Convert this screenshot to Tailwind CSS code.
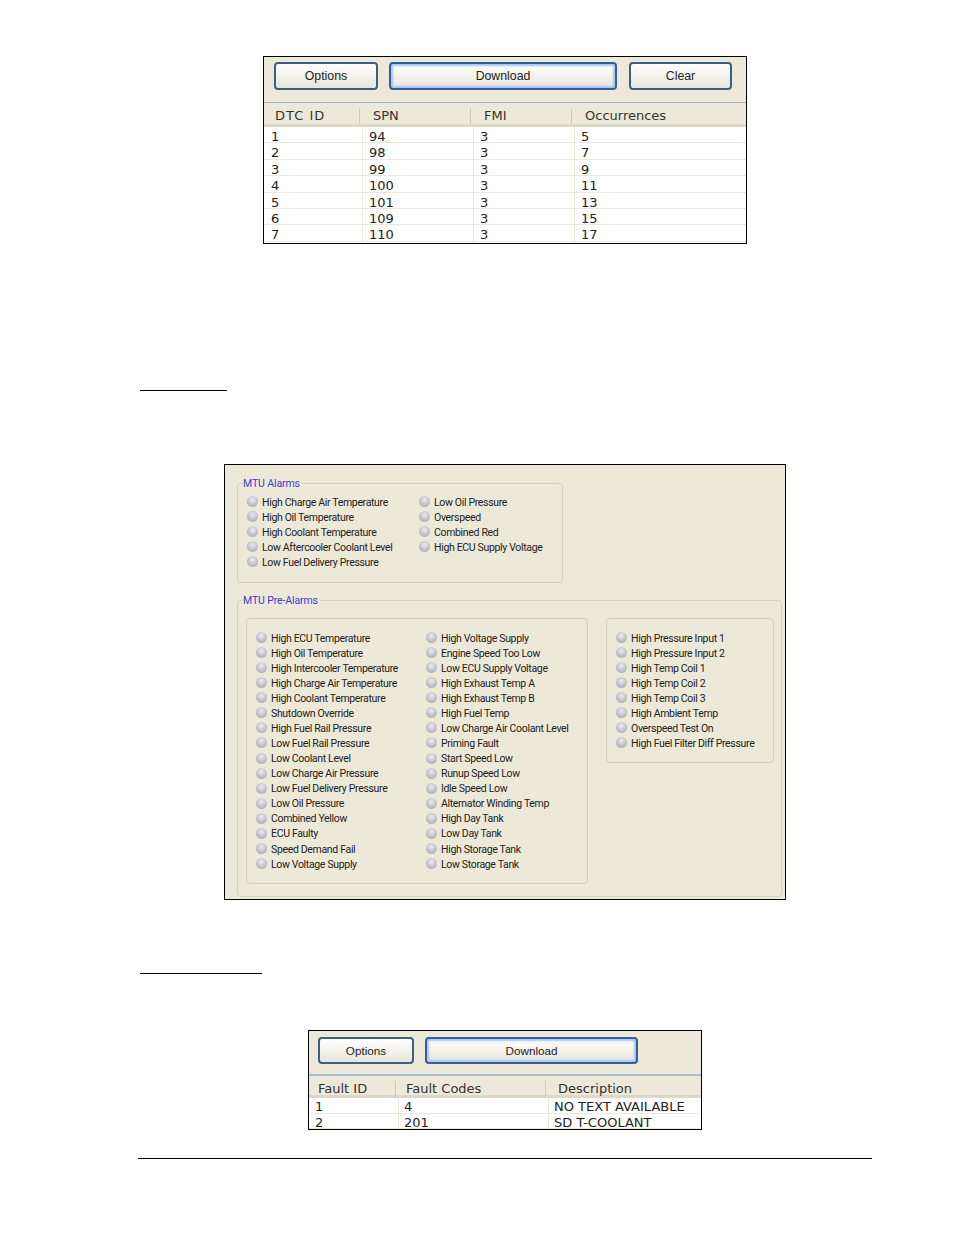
<!DOCTYPE html>
<html lang="en">
  <head>
    <meta charset="UTF-8" />
    <title>Alarm Screens</title>
    <script src="https://cdn.jsdelivr.net/npm/@tailwindcss/browser@4"></script>
  </head>
  <body class="bg-white min-h-screen font-['Liberation_Sans',sans-serif] overflow-hidden">
    <div class="w-[954px] h-[1235px] pt-[56px]">
      <!-- DTC table -->
      <div class="ml-[263px] w-[484px] h-[188px] border border-black bg-white overflow-hidden">
        <div class="h-[46px] bg-[#ece9d8] border-b border-[#9db4cc] flex pl-[10px] pt-[5px] gap-[11px]">
          <button class="w-[104px] h-[28px] rounded-[4px] border-2 border-[#3f5f80] bg-linear-to-b from-white to-[#e8e6da] text-[12.3px] text-[#222]">Options</button>
          <button class="w-[228px] h-[28px] rounded-[4px] border-2 border-[#2f5f9f] bg-linear-to-b from-white to-[#e8e6da] shadow-[inset_0_0_2px_2px_#a9c5ec] text-[12.3px] text-[#222]">Download</button>
          <button class="w-[103px] h-[28px] ml-px rounded-[4px] border-2 border-[#3f5f80] bg-linear-to-b from-white to-[#e8e6da] text-[12.3px] text-[#222]">Clear</button>
        </div>
        <div class="h-[24px] pt-[5px] bg-[#ece9d8] border-b-3 border-[#dcd9c8] grid grid-cols-[96px_111px_101px_1fr] items-center font-['DejaVu_Sans',sans-serif] text-[13px] text-[#333]">
          <div class="pl-[11px] tracking-[1px] border-r border-[#cfccbb] h-[16px] leading-[16px]">DTC ID</div>
          <div class="pl-[13px] border-r border-[#cfccbb] h-[16px] leading-[16px]">SPN</div>
          <div class="pl-[13px] border-r border-[#cfccbb] h-[16px] leading-[16px]">FMI</div>
          <div class="pl-[13px] h-[16px] leading-[16px]">Occurrences</div>
        </div>
        <div id="dtcRows" class="font-['DejaVu_Sans',sans-serif] text-[13px] text-[#222]"></div>
      </div>

      <div class="ml-[140px] mt-[146px] w-[87px] h-px bg-black"></div>

      <!-- Alarm panel -->
      <div class="ml-[224px] mt-[73px] w-[562px] h-[436px] border border-black bg-[#ece9d8] pl-[12px] pt-[12px] font-['Roboto',sans-serif] text-[10.5px] tracking-[-0.33px] text-[#222]">
        <fieldset class="w-[326px] h-[106px] border border-[#d4d1bf] rounded-[4px]">
          <legend class="ml-[5px] pr-[2px] text-[#3c3cd0] tracking-[-0.12px] leading-[13px]">MTU Alarms</legend>
          <div class="flex pt-[5px] pl-[9px]">
            <div id="alarmsA" class="w-[172px]"></div>
            <div id="alarmsB"></div>
          </div>
        </fieldset>
        <fieldset class="w-[545px] h-[303px] mt-[11px] border border-[#d4d1bf] rounded-[4px]">
          <legend class="ml-[5px] pr-[2px] text-[#3c3cd0] tracking-[-0.12px] leading-[13px]">MTU Pre-Alarms</legend>
          <div class="flex items-start pt-[11px] pl-[8px] gap-[18px]">
            <div class="w-[342px] h-[266px] border border-[#d4d1bf] rounded-[4px] flex pt-[12px] pl-[9px]">
              <div id="preA" class="w-[170px]"></div>
              <div id="preB"></div>
            </div>
            <div class="w-[168px] h-[145px] border border-[#d4d1bf] rounded-[4px] pt-[12px] pl-[9px]">
              <div id="preC"></div>
            </div>
          </div>
        </fieldset>
      </div>

      <div class="ml-[140px] mt-[73px] w-[122px] h-px bg-black"></div>

      <!-- Fault table -->
      <div class="ml-[308px] mt-[56px] w-[394px] h-[100px] border border-black bg-white overflow-hidden">
        <div class="h-[45px] bg-[#ece9d8] border-b-2 border-[#a9bdd2] flex pl-[9px] pt-[6px] gap-[11px]">
          <button class="w-[96px] h-[27px] rounded-[4px] border-2 border-[#3f5f80] bg-linear-to-b from-white to-[#e8e6da] text-[11.7px] text-[#222]">Options</button>
          <button class="w-[213px] h-[27px] rounded-[4px] border-2 border-[#2f5f9f] bg-linear-to-b from-white to-[#e8e6da] shadow-[inset_0_0_2px_2px_#a9c5ec] text-[11.7px] text-[#222]">Download</button>
        </div>
        <div class="h-[22px] pt-[5px] bg-[#ece9d8] border-b-3 border-[#dcd9c8] grid grid-cols-[87px_150px_1fr] items-center font-['DejaVu_Sans',sans-serif] text-[13px] text-[#333]">
          <div class="pl-[9px] border-r border-[#cfccbb] h-[16px] leading-[16px]">Fault ID</div>
          <div class="pl-[10px] border-r border-[#cfccbb] h-[16px] leading-[16px]">Fault Codes</div>
          <div class="pl-[12px] h-[16px] leading-[16px]">Description</div>
        </div>
        <div id="faultRows" class="font-['DejaVu_Sans',sans-serif] text-[13px] text-[#222]"></div>
      </div>

      <div class="ml-[138px] mt-[28px] w-[734px] h-px bg-black"></div>
    </div>

    <script>
      const dtc = [
        ["1", "94", "3", "5"],
        ["2", "98", "3", "7"],
        ["3", "99", "3", "9"],
        ["4", "100", "3", "11"],
        ["5", "101", "3", "13"],
        ["6", "109", "3", "15"],
        ["7", "110", "3", "17"],
      ];
      document.getElementById("dtcRows").innerHTML = dtc
        .map(
          (r) => `
          <div class="grid grid-cols-[99px_111px_101px_1fr] h-[16.4px] leading-[19px] border-b border-[#ece9d8]">
            <div class="pl-[7px] border-r border-[#ece9d8]">${r[0]}</div>
            <div class="pl-[6px] border-r border-[#ece9d8]">${r[1]}</div>
            <div class="pl-[6px] border-r border-[#ece9d8]">${r[2]}</div>
            <div class="pl-[6px]">${r[3]}</div>
          </div>`
        )
        .join("");

      const faults = [
        ["1", "4", "NO TEXT AVAILABLE"],
        ["2", "201", "SD T-COOLANT"],
      ];
      document.getElementById("faultRows").innerHTML = faults
        .map(
          (r) => `
          <div class="grid grid-cols-[90px_150px_1fr] h-[15.5px] leading-[17px] border-b border-[#ece9d8]">
            <div class="pl-[6px] border-r border-[#ece9d8]">${r[0]}</div>
            <div class="pl-[5px] border-r border-[#ece9d8]">${r[1]}</div>
            <div class="pl-[5px]">${r[2]}</div>
          </div>`
        )
        .join("");

      const lists = {
        alarmsA: ["High Charge Air Temperature", "High Oil Temperature", "High Coolant Temperature", "Low Aftercooler Coolant Level", "Low Fuel Delivery Pressure"],
        alarmsB: ["Low Oil Pressure", "Overspeed", "Combined Red", "High ECU Supply Voltage"],
        preA: ["High ECU Temperature", "High Oil Temperature", "High Intercooler Temperature", "High Charge Air Temperature", "High Coolant Temperature", "Shutdown Override", "High Fuel Rail Pressure", "Low Fuel Rail Pressure", "Low Coolant Level", "Low Charge Air Pressure", "Low Fuel Delivery Pressure", "Low Oil Pressure", "Combined Yellow", "ECU Faulty", "Speed Demand Fail", "Low Voltage Supply"],
        preB: ["High Voltage Supply", "Engine Speed Too Low", "Low ECU Supply Voltage", "High Exhaust Temp A", "High Exhaust Temp B", "High Fuel Temp", "Low Charge Air Coolant Level", "Priming Fault", "Start Speed Low", "Runup Speed Low", "Idle Speed Low", "Alternator Winding Temp", "High Day Tank", "Low Day Tank", "High Storage Tank", "Low Storage Tank"],
        preC: ["High Pressure Input 1", "High Pressure Input 2", "High Temp Coil 1", "High Temp Coil 2", "High Temp Coil 3", "High Ambient Temp", "Overspeed Test On", "High Fuel Filter Diff Pressure"],
      };
      Object.keys(lists).forEach((id) => {
        const rowHeight = id.startsWith("alarms") ? "h-[15px]" : "h-[15.07px]";
        document.getElementById(id).innerHTML = lists[id]
          .map(
            (label) => `
            <div class="flex items-center ${rowHeight} whitespace-nowrap">
              <span class="w-[11px] h-[11px] -mt-[2px] mr-[4px] rounded-full bg-[radial-gradient(circle_at_50%_35%,#ececf0,#bcbcc0_60%,#a8a8ac)]"></span>
              <span>${label}</span>
            </div>`
          )
          .join("");
      });
    </script>
  </body>
</html>
